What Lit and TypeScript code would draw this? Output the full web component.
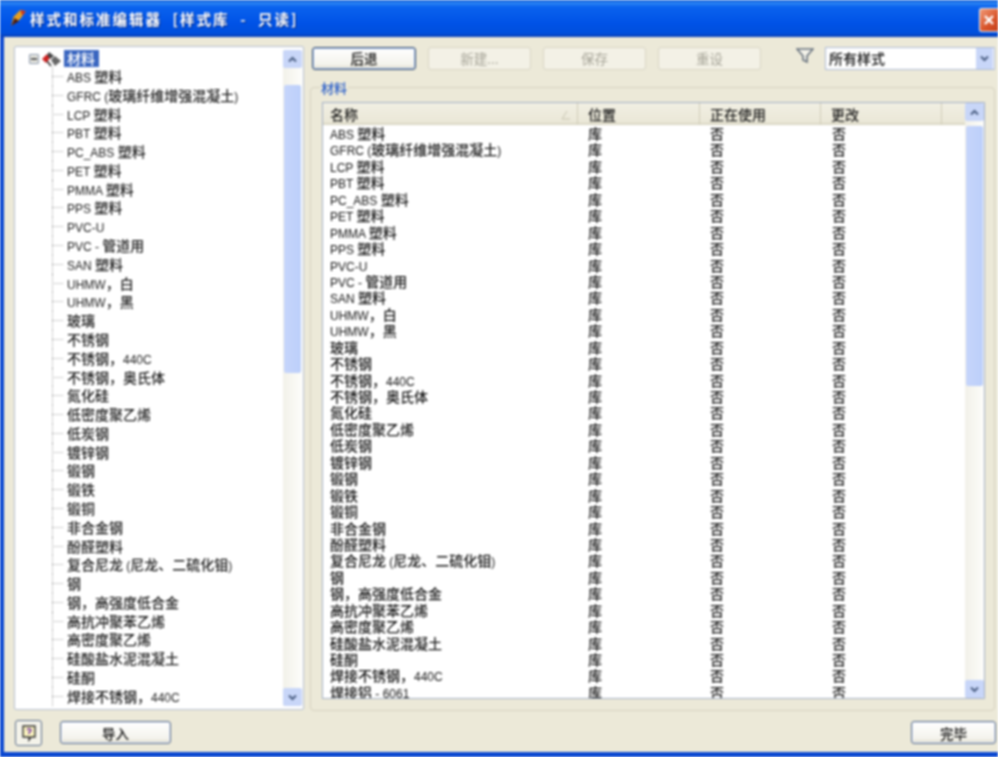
import { LitElement, html, css } from "lit";
import { customElement } from "lit/decorators.js";

const names = ["ABS 塑料","GFRC (玻璃纤维增强混凝土)","LCP 塑料","PBT 塑料","PC_ABS 塑料","PET 塑料","PMMA 塑料","PPS 塑料","PVC-U","PVC - 管道用","SAN 塑料","UHMW，白","UHMW，黑","玻璃","不锈钢","不锈钢，440C","不锈钢，奥氏体","氮化硅","低密度聚乙烯","低炭钢","镀锌钢","锻钢","锻铁","锻铜","非合金钢","酚醛塑料","复合尼龙 (尼龙、二硫化钼)","钢","钢，高强度低合金","高抗冲聚苯乙烯","高密度聚乙烯","硅酸盐水泥混凝土","硅酮","焊接不锈钢，440C"];
const tableNames = [...names, "焊接铝 - 6061"];

const mixed = (s: string) =>
  s.split(/([\x20-\x7e]+)/).filter(Boolean).map((p) =>
    /^[\x20-\x7e]+$/.test(p) ? html`<span class="lat">${p}</span>` : p);

const chevron = (up: boolean) => html`<svg width="9" height="7" viewBox="0 0 9 7"><path d=${up ? "M1 5.500L4.500 2L8 5.500" : "M1 1.500L4.500 5L8 1.500"} fill="none" stroke="#4d6185" stroke-width="2"/></svg>`;

@customElement("app-root")
export class AppRoot extends LitElement {
  static styles = css`
    :host { display: block; width: 998px; height: 757px; overflow: hidden; }
    * { box-sizing: border-box; }
    .win { width: 998px; height: 757px; display: flex; flex-direction: column; background: #ece9d8;
      font-family: "Noto Sans CJK SC", "Liberation Sans", sans-serif; font-size: 14px; font-weight: 500; color: #111;
      filter: blur(0.8px); border: solid #0a47d0; border-width: 0 0 5px 4px; }
    .lat { font-family: "Liberation Sans", sans-serif; font-size: 12px; font-weight: 400; }
    .title { flex: 0 0 37px; margin: 0 0 0 -4px; display: flex; align-items: center; padding: 0 0 0 9px; gap: 3px;
      background: linear-gradient(#0a52cf 0, #2c86f5 3px, #0a62ee 7px, #0052e6 24px, #0050dd 33px, #0a3fb5 37px); }
    .title .t { color: #fff; font-weight: 700; font-size: 14.500px; letter-spacing: 2px; white-space: pre; text-shadow: 1px 1px 1px #0a2d80; }
    .close { margin-left: auto; width: 19px; height: 24px; margin-top: 3px; background: linear-gradient(135deg,#f09a78,#d8542a 60%,#c2401c); border: 1px solid #eee; border-right: 0; border-radius: 3px 0 0 3px; display: flex; align-items: center; justify-content: center; }
    .main { flex: 0 0 673px; min-height: 0; display: grid; grid-template-columns: 290px 1fr; gap: 6px; padding: 9px 2px 0 10px; }
    .tree { height: 664px; background: #fff; border: 1px solid #b5bfcf; border-radius: 2px; display: flex; overflow: hidden; padding: 3px 1px 3px 0; }
    .treebody { flex: 1; min-width: 0; overflow: hidden; padding-left: 37px; }
    .tree-root { height: 17px; display: flex; align-items: center; margin-left: -23px; gap: 3px; }
    .plus { width: 10px; height: 10px; border: 1px solid #8b98ad; background: #e8e8e0; border-radius: 1px; position: relative; flex: none; }
    .plus::after { content: ""; position: absolute; left: 1px; right: 1px; top: 3px; height: 2px; background: #555; }
    .sel { background: #3a66c0; color: #fff; padding: 0 4px 0 3px; line-height: 17px; height: 17px; margin-left: -1px; }
    .node { height: 18.790px; line-height: 18.790px; white-space: nowrap; padding-left: 15px; position: relative; color: #1c1c1c; }
    .node::before { content: ""; position: absolute; left: 0; top: 0; bottom: 0; border-left: 1px dotted #a8a8a8; }
    .node::after { content: ""; position: absolute; left: 0; width: 11px; top: 9px; border-top: 1px dotted #a8a8a8; }
    .sb { flex: 0 0 19px; display: flex; flex-direction: column; background: linear-gradient(90deg,#f2f1e9,#fdfdfa); }
    .sbbtn { flex: 0 0 18px; background: #c8d6f8; border-radius: 2px; display: flex; align-items: center; justify-content: center; }
    .thumb { background: linear-gradient(90deg,#c6d5fb,#bccffa); border-radius: 2px; margin: 0 1px; }
    .gap { flex: 1; }
    .right { display: flex; flex-direction: column; min-width: 0; }
    .bar { display: flex; align-items: center; height: 24px; margin-left: 2px; gap: 12px; }
    .btn { width: 104px; height: 23px; border: 1px solid #5c6f8c; border-radius: 3px; display: flex; align-items: center; justify-content: center;
      background: linear-gradient(#fff,#f4f3ec 80%,#dcd8c8); font-size: 13.500px; color: #111; box-shadow: inset 0 0 0 1px #dfe6f5; flex: none; }
    .btn.def { box-shadow: inset 0 0 0 1px #9db7e0; border-color: #3f5577; }
    .btn.off { width: 103px; border-color: #d8d5c4; background: #f3f1e6; color: #a8a69a; box-shadow: none; font-weight: 400; }
    .funnel { margin-left: 23px; margin-top: -5px; flex: none; }
    .select { margin-left: -1px; width: 170px; height: 23px; background: #fff; border: 1px solid #aebbd4; display: flex; align-items: center; justify-content: space-between; padding: 0 1px 0 3px; flex: none; }
    .select .arrow { width: 17px; height: 21px; background: #c8d6f8; display: flex; align-items: center; justify-content: center; }
    .group { position: relative; height: 624px; margin: 17px 1px 0 0; border: 1px solid #d6d2bf; border-radius: 4px; padding: 14px 9px 11px 11px; }
    .legend { position: absolute; left: 9px; top: -7px; background: #ece9d8; color: #2a5ec8; font-size: 13px; line-height: 14px; padding: 0 1px; }
    .list { height: 597px; background: #fff; border: 1px solid #a3afc4; display: flex; overflow: hidden; }
    .lbody { flex: 1; min-width: 0; display: flex; flex-direction: column; overflow: hidden; }
    .head { flex: 0 0 22px; display: grid; grid-template-columns: 255px 122px 121px 121px 1fr; background: linear-gradient(#f1efe3,#ebe8d8 85%,#d6d2be); }
    .head div { padding-left: 10px; line-height: 22px; border-right: 1px solid #d0ccb8; position: relative; color: #1c1c1c; overflow: hidden; }
    .head div:first-child { padding-left: 7px; }
    .head div:last-child { border: 0; }
    .sort { position: absolute; right: 5px; top: 7px; }
    .rows { flex: 1; overflow: hidden; }
    .row { height: 16.450px; line-height: 16.450px; display: grid; grid-template-columns: 258px 122px 122px 1fr; padding-left: 7px; white-space: nowrap; color: #151515; }
    .foot { flex: 1; min-height: 0; display: flex; align-items: flex-start; padding: 11px 2px 0 11px; gap: 18px; }
    .help { width: 27px; height: 26px; margin-top: -1px; border: 1px solid #5c6f8c; border-radius: 3px; background: #f4f3ea; display: flex; align-items: center; justify-content: center; flex: none; }
    .b2 { width: 111px; }
    .b3 { width: 85px; margin-left: auto; }
  `;

  render() {
    const sb = (thumbH: number, top: number) => html`<div class="sb"><div class="sbbtn">${chevron(true)}</div><div style="height:${top}px"></div><div class="thumb" style="height:${thumbH}px"></div><div class="gap"></div><div class="sbbtn">${chevron(false)}</div></div>`;
    return html`<div class="win">
      <div class="title">
        <svg width="18" height="19" viewBox="0 0 16 17"><path d="M2 15L4 7L10 1L15 2L10 9Z" fill="#e8a020"/><path d="M2 15L5 8L9 11Z" fill="#4a1c10"/><path d="M10 1L15 2L12 6Z" fill="#d03018"/></svg>
        <span class="t">样式和标准编辑器  [样式库  -  只读]</span>
        <span class="close"><svg width="12" height="12" viewBox="0 0 12 12"><path d="M2 2L10 10M10 2L2 10" stroke="#fff" stroke-width="2.400"/></svg></span>
      </div>
      <div class="main">
        <div class="tree">
          <div class="treebody">
            <div class="tree-root"><span class="plus"></span>
              <svg width="20" height="16" viewBox="0 0 20 16"><path d="M0 8L5 3L8 7L4 12Z" fill="#d02020"/><path d="M7 1L12 5L8 8L5 4Z" fill="#444"/><path d="M9 9L13 5L19 10L13 15Z" fill="#666"/><path d="M5 10L9 15" stroke="#222" stroke-width="1.500"/></svg>
              <span class="sel">材料</span></div>
            ${names.map((n) => html`<div class="node">${mixed(n)}</div>`)}
          </div>
          ${sb(288, 17)}
        </div>
        <div class="right">
          <div class="bar">
            <div class="btn def">后退</div><div class="btn off">新建...</div><div class="btn off">保存</div><div class="btn off">重设</div>
            <svg class="funnel" width="18" height="16" viewBox="0 0 18 16"><path d="M1 1H17L11 8V14L7 12V8Z" fill="#f4f3ea" stroke="#66707c" stroke-width="1.600"/></svg>
            <div class="select"><span>所有样式</span><span class="arrow">${chevron(false)}</span></div>
          </div>
          <div class="group">
            <span class="legend">材料</span>
            <div class="list">
              <div class="lbody">
                <div class="head"><div>名称<svg class="sort" width="12" height="10" viewBox="0 0 12 10"><path d="M7 1L2 9H10" fill="none" stroke="#c8c4b0"/></svg></div><div>位置</div><div>正在使用</div><div>更改</div><div></div></div>
                <div class="rows">${tableNames.map((n) => html`<div class="row"><span>${mixed(n)}</span><span>库</span><span>否</span><span>否</span></div>`)}</div>
              </div>
              ${sb(260, 5)}
            </div>
          </div>
        </div>
      </div>
      <div class="foot">
        <div class="help"><svg width="18" height="18" viewBox="0 0 18 18"><path d="M3 2H15V13H11L9 16V13H3Z" fill="#fdf6c0" stroke="#333" stroke-width="1.400"/><path d="M7 6Q9 3.500 11 6Q11 7.500 9 8.500V10" fill="none" stroke="#6a2aa0" stroke-width="1.400"/></svg></div>
        <div class="btn b2">导入</div>
        <div class="btn b3">完毕</div>
      </div>
    </div>`;
  }
}
